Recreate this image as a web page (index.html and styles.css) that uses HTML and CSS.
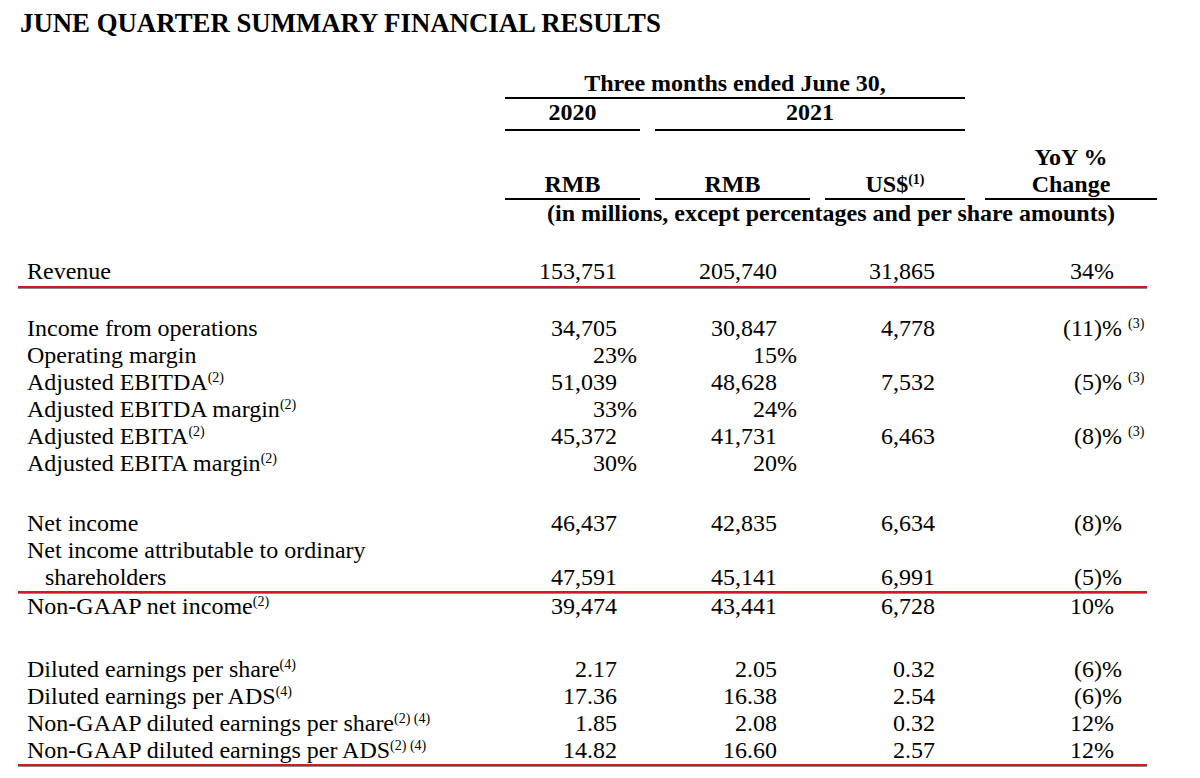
FILE: index.html
```html
<!DOCTYPE html>
<html lang="en">
<head>
<meta charset="utf-8">
<title>June Quarter Summary Financial Results</title>
<link rel="stylesheet" href="styles.css">
</head>
<body>
<div class="page">
  <h1 class="title">JUNE QUARTER SUMMARY FINANCIAL RESULTS</h1>

  <div class="head">
    <div class="h-three ul">Three months ended June 30,</div>
    <div class="h-2020 ul">2020</div>
    <div class="h-2021 ul">2021</div>
    <div class="h-c1 ul">RMB</div>
    <div class="h-c2 ul">RMB</div>
    <div class="h-c3 ul">US$<sup class="fn">(1)</sup></div>
    <div class="h-c4 ul">YoY %<br>Change</div>
    <div class="h-units">(in millions, except percentages and per share amounts)</div>
  </div>

  <div class="group g-rev">
    <div class="row rule">
      <div class="lbl">Revenue</div>
      <div class="v c1">153,751</div>
      <div class="v c2">205,740</div>
      <div class="v c3">31,865</div>
      <div class="v c4">34<span class="sfx">%</span></div>
    </div>
  </div>

  <div class="group g-ops">
    <div class="row">
      <div class="lbl">Income from operations</div>
      <div class="v c1">34,705</div>
      <div class="v c2">30,847</div>
      <div class="v c3">4,778</div>
      <div class="v c4">(11<span class="sfx">)% <sup class="fn">(3)</sup></span></div>
    </div>
    <div class="row">
      <div class="lbl">Operating margin</div>
      <div class="v c1">23<span class="sfx">%</span></div>
      <div class="v c2">15<span class="sfx">%</span></div>
      <div class="v c3"></div>
      <div class="v c4"></div>
    </div>
    <div class="row">
      <div class="lbl">Adjusted EBITDA<sup class="fn">(2)</sup></div>
      <div class="v c1">51,039</div>
      <div class="v c2">48,628</div>
      <div class="v c3">7,532</div>
      <div class="v c4">(5<span class="sfx">)% <sup class="fn">(3)</sup></span></div>
    </div>
    <div class="row">
      <div class="lbl">Adjusted EBITDA margin<sup class="fn">(2)</sup></div>
      <div class="v c1">33<span class="sfx">%</span></div>
      <div class="v c2">24<span class="sfx">%</span></div>
      <div class="v c3"></div>
      <div class="v c4"></div>
    </div>
    <div class="row">
      <div class="lbl">Adjusted EBITA<sup class="fn">(2)</sup></div>
      <div class="v c1">45,372</div>
      <div class="v c2">41,731</div>
      <div class="v c3">6,463</div>
      <div class="v c4">(8<span class="sfx">)% <sup class="fn">(3)</sup></span></div>
    </div>
    <div class="row">
      <div class="lbl">Adjusted EBITA margin<sup class="fn">(2)</sup></div>
      <div class="v c1">30<span class="sfx">%</span></div>
      <div class="v c2">20<span class="sfx">%</span></div>
      <div class="v c3"></div>
      <div class="v c4"></div>
    </div>
  </div>

  <div class="group g-net">
    <div class="row">
      <div class="lbl">Net income</div>
      <div class="v c1">46,437</div>
      <div class="v c2">42,835</div>
      <div class="v c3">6,634</div>
      <div class="v c4">(8<span class="sfx">)%</span></div>
    </div>
    <div class="row rule rule-tight">
      <div class="lbl hang">Net income attributable to ordinary shareholders</div>
      <div class="v c1">47,591</div>
      <div class="v c2">45,141</div>
      <div class="v c3">6,991</div>
      <div class="v c4">(5<span class="sfx">)%</span></div>
    </div>
    <div class="row">
      <div class="lbl">Non-GAAP net income<sup class="fn">(2)</sup></div>
      <div class="v c1">39,474</div>
      <div class="v c2">43,441</div>
      <div class="v c3">6,728</div>
      <div class="v c4">10<span class="sfx">%</span></div>
    </div>
  </div>

  <div class="group g-eps">
    <div class="row">
      <div class="lbl">Diluted earnings per share<sup class="fn">(4)</sup></div>
      <div class="v c1">2.17</div>
      <div class="v c2">2.05</div>
      <div class="v c3">0.32</div>
      <div class="v c4">(6<span class="sfx">)%</span></div>
    </div>
    <div class="row">
      <div class="lbl">Diluted earnings per ADS<sup class="fn">(4)</sup></div>
      <div class="v c1">17.36</div>
      <div class="v c2">16.38</div>
      <div class="v c3">2.54</div>
      <div class="v c4">(6<span class="sfx">)%</span></div>
    </div>
    <div class="row">
      <div class="lbl">Non-GAAP diluted earnings per share<sup class="fn">(2) (4)</sup></div>
      <div class="v c1">1.85</div>
      <div class="v c2">2.08</div>
      <div class="v c3">0.32</div>
      <div class="v c4">12<span class="sfx">%</span></div>
    </div>
    <div class="row rule rule-tight">
      <div class="lbl">Non-GAAP diluted earnings per ADS<sup class="fn">(2) (4)</sup></div>
      <div class="v c1">14.82</div>
      <div class="v c2">16.60</div>
      <div class="v c3">2.57</div>
      <div class="v c4">12<span class="sfx">%</span></div>
    </div>
  </div>
</div>
</body>
</html>
```

FILE: styles.css
```css
html, body {
  margin: 0;
  padding: 0;
  background: #ffffff;
}

body {
  font-family: "Liberation Serif", "Times New Roman", serif;
  color: #000000;
  width: 1200px;
  height: 778px;
  overflow: hidden;
}

.page {
  padding: 8px 0 0 18px;
}

.title {
  margin: 0 0 0 2px;
  font-size: 26.8px;
  line-height: 30px;
  font-weight: bold;
}

/* ---------- header ---------- */
.head {
  margin-top: 32px;
  display: grid;
  grid-template-columns: 487px 135px 15px 155px 15px 140px 20px 172px;
  font-size: 24px;
  font-weight: bold;
  line-height: 27px;
  text-align: center;
}

.ul {
  border-bottom: 2px solid #000000;
}

.h-three {
  grid-row: 1;
  grid-column: 2 / 7;
}

.h-2020 {
  grid-row: 2;
  grid-column: 2;
  padding-bottom: 3px;
}

.h-2021 {
  grid-row: 2;
  grid-column: 4 / 7;
  padding-bottom: 3px;
}

.h-c1, .h-c2, .h-c3 {
  grid-row: 3;
  align-self: end;
}

.h-c1 { grid-column: 2; }
.h-c2 { grid-column: 4; }
.h-c3 { grid-column: 6; }

.h-c4 {
  grid-row: 3;
  grid-column: 8;
  padding-top: 13px;
}

.h-units {
  grid-row: 4;
  grid-column: 2 / 9;
}

/* ---------- body ---------- */
.group {
  font-size: 24px;
  line-height: 27px;
}

.g-rev { margin-top: 31px; }
.g-ops { margin-top: 27px; }
.g-net { margin-top: 33px; }
.g-eps { margin-top: 36px; }

.row {
  display: grid;
  grid-template-columns: 487px 135px 170px 155px 182px;
  width: 1129px;
}

.lbl {
  padding-left: 9px;
  white-space: nowrap;
}

.lbl.hang {
  white-space: normal;
  max-width: 360px;
  padding-left: 27px;
  text-indent: -18px;
}

.v {
  text-align: right;
  align-self: end;
  white-space: nowrap;
}

.c1 { padding-right: 23px; }
.c2 { padding-right: 33px; }
.c3 { padding-right: 30px; }
.c4 { padding-right: 53px; }

.sfx {
  display: inline-block;
  width: 0;
  text-align: left;
  white-space: nowrap;
}

.fn {
  font-size: 14px;
  line-height: 0;
  vertical-align: 8px;
}

.rule {
  padding-bottom: 1px;
  border-bottom: 2px solid #d7171f;
  box-shadow: 0 1px 0 #8c8c8c;
}

.rule-tight {
  padding-bottom: 0;
}
```
